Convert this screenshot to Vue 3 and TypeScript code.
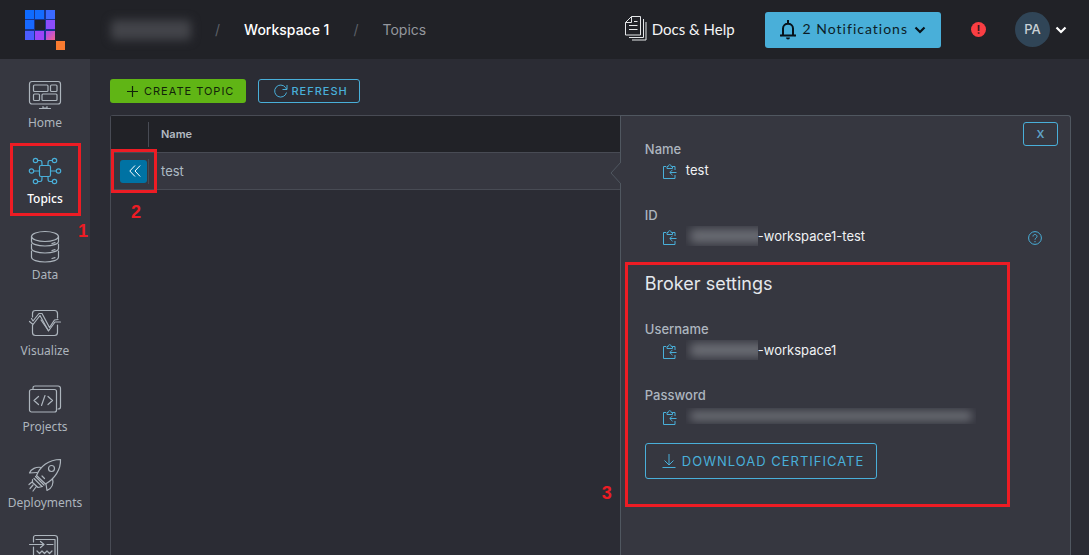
<script setup lang="ts">
import { ref } from 'vue'

interface NavItem {
  id: string
  label: string
}

const navItems: NavItem[] = [
  { id: 'home', label: 'Home' },
  { id: 'topics', label: 'Topics' },
  { id: 'data', label: 'Data' },
  { id: 'visualize', label: 'Visualize' },
  { id: 'projects', label: 'Projects' },
  { id: 'deployments', label: 'Deployments' },
  { id: 'pipeline', label: '' },
]

const active = ref('topics')

const logoCells = [
  { x: 0, y: 0, fill: '#0f6bff' },
  { x: 10, y: 0, fill: '#146cff' },
  { x: 21, y: 0, fill: '#3b69ff' },
  { x: 0, y: 10, fill: '#1769ff' },
  { x: 21, y: 10, fill: '#8b4dfa' },
  { x: 0, y: 21, fill: '#4b5cff' },
  { x: 10, y: 21, fill: '#9b45f8' },
]
</script>

<template>
  <div class="app">
    <header class="topbar">
      <a class="logo" href="#" aria-label="Start page">
        <svg width="42" height="42" viewBox="0 0 42 42">
          <defs>
            <linearGradient id="corner" x1="0" y1="0" x2="1" y2="1">
              <stop offset="0.2" stop-color="#b44be8" />
              <stop offset="1" stop-color="#f0648c" />
            </linearGradient>
          </defs>
          <rect width="30" height="30" x="0" y="1" fill="#17348c" />
          <rect v-for="c in logoCells" :key="`${c.x}-${c.y}`" :x="c.x" :y="c.y + 1" width="9" height="9" :fill="c.fill" />
          <rect x="10" y="11" width="10" height="10" fill="#20222a" />
          <rect x="21" y="22" width="9" height="9" fill="url(#corner)" />
          <rect x="31" y="32" width="9" height="9" fill="#f97b30" />
        </svg>
      </a>
      <nav class="crumbs" aria-label="Breadcrumb">
        <span class="redacted org"></span>
        <span class="slash">/</span>
        <a class="workspace" href="#">Workspace 1</a>
        <span class="slash">/</span>
        <span class="page">Topics</span>
      </nav>
      <a class="docs" href="#">
        <svg width="22" height="25" viewBox="0 0 22 25" fill="none" stroke="#e4e6e8">
          <path d="M6.500.5h9v18.500H.5V6.500zM6.500.5v6H.5M4 9.500h8.500M4 13.500h8.500M9 5.500h3.500" />
          <path d="M18.500 3v18.500H4M21 6v18H7" />
        </svg>
        Docs &amp; Help
      </a>
      <button class="notifications" type="button">
        <svg width="18" height="20" viewBox="0 0 18 20">
          <path d="M9 0v3M4 15V8.500c0-6.300 10-6.300 10 0V15M1 15.500h16M3.500 15l-1.500 1M14.500 15l1.500 1" fill="none" stroke="#07131b" stroke-width="2" />
          <path d="M7 17.500h4a2 2 0 0 1-4 0z" fill="#07131b" />
        </svg>
        <span>2 Notifications</span>
        <svg width="12" height="8" viewBox="0 0 12 8"><path d="M1.500 1.500 6 6l4.500-4.500" fill="none" stroke="#07131b" stroke-width="2.200" /></svg>
      </button>
      <span class="alert" role="img" aria-label="Alert">!</span>
      <button class="account" type="button">
        <span class="avatar">PA</span>
        <svg width="12" height="8" viewBox="0 0 12 8"><path d="M1.500 1.500 6 6l4.500-4.500" fill="none" stroke="#fff" stroke-width="2.200" /></svg>
      </button>
    </header>

    <div class="body">
      <nav class="sidebar" aria-label="Main">
        <a
          v-for="item in navItems"
          :key="item.id"
          href="#"
          class="nav-item"
          :class="{ active: item.id === active }"
          :aria-label="item.label || 'Pipelines'"
          @click.prevent="active = item.id"
        >
          <svg width="34" height="34" viewBox="0 0 34 34" fill="none" stroke="currentColor" stroke-width="1.200" stroke-linecap="round" stroke-linejoin="round">
            <g v-if="item.id === 'home'">
              <rect x="1.500" y="3.500" width="31" height="22.500" rx="2.500" />
              <rect x="5.500" y="7" width="14.500" height="6.500" rx="1" />
              <rect x="22.500" y="7" width="6.500" height="6.500" rx="1" />
              <rect x="5.500" y="16" width="6" height="6.500" rx="1" />
              <rect x="14" y="16" width="15" height="6.500" rx="1" />
              <path d="M15 28.500v1.500h4v-1.500M11.500 30.500h11" />
            </g>
            <g v-else-if="item.id === 'topics'">
              <rect x="11.500" y="11.500" width="11" height="11" rx="1.500" />
              <circle cx="7.500" cy="6.500" r="2.200" /><circle cx="26.500" cy="6.500" r="2.200" />
              <circle cx="3.500" cy="17" r="2.200" /><circle cx="30.500" cy="17" r="2.200" />
              <circle cx="7.500" cy="27.500" r="2.200" /><circle cx="26.500" cy="27.500" r="2.200" />
              <path d="M9.700 6.500H12c2 0 2 1 2 5M24.300 6.500H22c-2 0-2 1-2 5M5.700 17h5.800M22.500 17h5.800M9.700 27.500H12c2 0 2-1 2-5M24.300 27.500H22c-2 0-2-1-2-5" />
            </g>
            <g v-else-if="item.id === 'data'">
              <ellipse cx="17" cy="6.500" rx="13.500" ry="5" />
              <path d="M3.500 6.500v5c0 2.500 6 4.500 13.500 4.500s13.500-2 13.500-4.500v-5M3.500 14v4.500C3.500 21 9.500 23 17 23s13.500-2 13.500-4.500V14M3.500 21v6c0 3 6 5 13.500 5s13.500-2 13.500-5v-6" />
              <path d="M24 13.500l3-.8M24 20.500l3-.8M24 28.500l3-.8" />
            </g>
            <g v-else-if="item.id === 'visualize'">
              <path d="M4.500 11V7.500c0-2 1-3 3-3h19c2 0 3 1 3 3V12M4.500 19v7.500c0 2 1 3 3 3h19c2 0 3-1 3-3V19" />
              <path d="M1.500 15.500 5 18.500l7-9 8.500 15.500 6.500-9h5.500" />
              <path d="M3.500 12.500 5 15l6-7.500h3l7.500 14 5-7.500 3.500-.5M13 14l7 10" />
            </g>
            <g v-else-if="item.id === 'projects'">
              <rect x="1.500" y="7.500" width="27" height="22.500" rx="2" />
              <path d="M5 7V6c0-1.500 1-2 2-2h23c1.500 0 2.500 1 2.500 2.500V25c0 1-1 2-2.500 2" />
              <path d="m10.500 14.500-4.500 4 4.500 4M20 14.500l4.500 4-4.500 4M17 13.500l-3.500 10" />
            </g>
            <g v-else-if="item.id === 'deployments'">
              <path d="M8.500 17.500C12 9 20 1.500 32.500 1.500c.5 10-6 19.500-15 24.500z" />
              <circle cx="23.500" cy="10.500" r="3" />
              <path d="M13.500 9.500C8 8.500 3 11 1.500 15l7.500-.5M24.500 20.500c1.500 5-.5 10-5.500 12l-1-6.500" />
              <path d="m7.500 18.500 8.500 8.500M6 20.500l8 8M4.500 21.500v3l5.500 5 4.500-1M14 18l2.500 2.500M5 27l-3 3.500M8 29l-3 4M4 24l-3 2.500" />
            </g>
            <g v-else>
              <path d="M5.500 8V3.500c0-1 1-2 2-2h19c1.500 0 3 1 3 2.500V34M5.500 13v18M8 5.500h19v25M1.500 10.500h13M12.500 7.500l3.500 3-3.500 3M19 10.500h6" />
              <path d="m9 17 2.500 2.500L14 17l2.500 2.500L19 17l2.500 2.500L24 17M9 23h14" />
            </g>
          </svg>
          <span class="nav-label">{{ item.label }}</span>
          <template v-if="item.id === 'topics'">
            <span class="mark mark-nav"></span>
            <span class="step step-nav">1</span>
          </template>
        </a>
      </nav>

      <main class="content">
        <div class="toolbar">
          <button class="btn create" type="button">
            <svg width="11" height="11" viewBox="0 0 11 11"><path d="M5.500 0v11M0 5.500h11" stroke="currentColor" stroke-width="1.200" /></svg>
            CREATE TOPIC
          </button>
          <button class="btn refresh" type="button">
            <svg width="14" height="14" viewBox="0 0 14 14" fill="none" stroke="currentColor"><path d="M12.500 8.500A6 6 0 1 1 11.500 3.500L12.500 5M13 1v4.500H8.500" /></svg>
            REFRESH
          </button>
        </div>

        <div class="workarea">
          <div class="list">
            <table class="topics">
              <thead>
                <tr><th class="toggle"><span class="divider"></span></th><th scope="col">Name</th></tr>
              </thead>
              <tbody>
                <tr>
                  <td class="toggle">
                    <span class="divider"></span>
                    <button class="collapse" type="button" aria-label="Close details">
                      <svg width="12" height="12" viewBox="0 0 12 12" fill="none" stroke="#fff"><path d="M6 .5.800 6 6 11.500M11.200.5 6 6l5.200 5.500" /></svg>
                    </button>
                    <span class="mark mark-row"></span>
                    <span class="step step-row">2</span>
                  </td>
                  <td class="name">
                    test
                    <svg class="notch" width="11" height="22" viewBox="0 0 11 22"><path d="M11 0 1 11l10 11" fill="#363740" stroke="#505760" /></svg>
                  </td>
                </tr>
              </tbody>
            </table>
          </div>

          <section class="details" aria-label="Topic details">
            <div class="fields">
              <dl class="field">
                <dt>Name</dt>
                <dd>
                  <button class="copy" type="button" aria-label="Copy name"><svg width="14" height="15" viewBox="0 0 14 15"><use href="#clip" /></svg></button>
                  test
                </dd>
              </dl>
              <dl class="field">
                <dt>ID</dt>
                <dd>
                  <button class="copy" type="button" aria-label="Copy ID"><svg width="14" height="15" viewBox="0 0 14 15"><use href="#clip" /></svg></button>
                  <span class="mask"><span class="redacted"></span></span>-workspace1-test
                </dd>
              </dl>
              <div class="broker">
                <h2>Broker settings</h2>
                <dl class="field">
                  <dt>Username</dt>
                  <dd>
                    <button class="copy" type="button" aria-label="Copy username"><svg width="14" height="15" viewBox="0 0 14 15"><use href="#clip" /></svg></button>
                    <span class="mask"><span class="redacted"></span></span>-workspace1
                  </dd>
                </dl>
                <dl class="field">
                  <dt>Password</dt>
                  <dd>
                    <button class="copy" type="button" aria-label="Copy password"><svg width="14" height="15" viewBox="0 0 14 15"><use href="#clip" /></svg></button>
                    <span class="mask long"><span class="redacted"></span></span>
                  </dd>
                </dl>
                <button class="btn download" type="button">
                  <svg width="14" height="14" viewBox="0 0 14 14" fill="none" stroke="currentColor"><path d="M7 0v11M2.500 6.500 7 11l4.500-4.500M.5 13.500h13" /></svg>
                  DOWNLOAD CERTIFICATE
                </button>
                <span class="step step-broker">3</span>
              </div>
            </div>
            <div class="side">
              <button class="close" type="button" aria-label="Close panel">X</button>
              <button class="help" type="button" aria-label="Help">
                <svg width="14" height="14" viewBox="0 0 14 14" fill="none" stroke="currentColor"><circle cx="7" cy="7" r="6.400" /><path d="M5 5.500c0-2.800 4-2.500 4 0C9 7 7 7 7 8.700M7 10v1.200" /></svg>
              </button>
            </div>
          </section>
        </div>
      </main>
    </div>

    <svg class="symbols" width="0" height="0" aria-hidden="true">
      <symbol id="clip" viewBox="0 0 14 15">
        <path d="M3 2.500H.5v12h11.500V11M12 6V2.500H9.500M4 4.500v-2h1.200c0-2.400 3-2.400 3 0h1.300v2zM13.500 8.500H7M9.500 5.800 6.800 8.500l2.700 2.700" fill="none" stroke="#49afd9" />
      </symbol>
    </svg>
  </div>
</template>

<style>
body {
  background: #2b2c34;
}
</style>

<style scoped>
* {
  box-sizing: border-box;
}

.app {
  display: flex;
  flex-direction: column;
  height: 100vh;
  overflow: hidden;
  background: #2b2c34;
  color: #adbbc4;
  font-family: Inter, 'Liberation Sans', sans-serif;
  font-size: 13px;
}

button {
  padding: 0;
  border: 0;
  background: none;
  color: inherit;
  font: inherit;
  cursor: pointer;
}

a {
  color: inherit;
  text-decoration: none;
}

svg {
  display: block;
  flex: none;
}

.symbols {
  position: absolute;
}

.topbar {
  display: flex;
  flex: none;
  align-items: center;
  height: 59px;
  padding: 0 22px 0 25px;
  background: #212227;
}

.logo {
  margin-right: 44px;
}

.crumbs {
  display: flex;
  flex: 1;
  align-items: center;
  gap: 24px;
  font-size: 14px;
}

.redacted {
  display: block;
  border-radius: 4px;
  background: #6a6c73;
  filter: blur(5px);
}

.org {
  width: 80px;
  height: 20px;
  background: #43444a;
}

.slash {
  color: #5c6068;
}

.workspace {
  color: #fff;
  font-weight: 500;
}

.page {
  color: #94979d;
}

.docs {
  display: flex;
  align-items: center;
  gap: 5px;
  margin-right: 30px;
  padding-bottom: 2px;
  color: #f4f5f6;
  font-family: Lato, sans-serif;
  font-size: 15px;
}

.notifications {
  display: flex;
  align-items: center;
  gap: 6px;
  height: 36px;
  padding: 0 15px 0 14px;
  border-radius: 3px;
  background: #49afd9;
  color: #0c1d27;
  font-family: Lato, sans-serif;
  font-size: 14px;
  letter-spacing: 1px;
}

.notifications > span {
  padding-bottom: 2px;
}

.alert {
  width: 15px;
  height: 15px;
  margin: 0 29px 0 30px;
  border-radius: 50%;
  background: #fa3e43;
  color: #34181c;
  font-size: 12px;
  font-weight: 600;
  line-height: 15px;
  text-align: center;
}

.account {
  display: flex;
  align-items: center;
  gap: 5px;
}

.avatar {
  width: 35px;
  height: 35px;
  border-radius: 50%;
  background: #304557;
  color: #c9d0d5;
  font-size: 13px;
  font-weight: 500;
  line-height: 35px;
}

.body {
  display: flex;
  flex: 1;
  min-height: 0;
}

.sidebar {
  display: flex;
  flex: none;
  flex-direction: column;
  width: 90px;
  padding-top: 8px;
  background: #363740;
}

.nav-item {
  position: relative;
  display: flex;
  flex: none;
  flex-direction: column;
  align-items: center;
  gap: 2px;
  height: 76px;
  padding-top: 11px;
  color: #adb5bd;
  font-family: 'Noto Sans', 'Open Sans', sans-serif;
  font-size: 12px;
  line-height: 18px;
}

.nav-item.active {
  color: #49afd9;
}

.active .nav-label {
  color: #fff;
  font-weight: 500;
}

.mark {
  position: absolute;
  border: 3px solid #ed1c24;
  pointer-events: none;
}

.mark-nav {
  top: 0;
  right: 9px;
  left: 10px;
  height: 73px;
}

.step {
  position: absolute;
  color: #ed1c24;
  font-family: 'Liberation Sans Narrow', 'Liberation Sans', sans-serif;
  font-size: 18px;
  font-weight: 700;
  line-height: 20px;
}

.step-nav {
  top: 78px;
  right: 2px;
}

.content {
  display: flex;
  flex: 1;
  flex-direction: column;
  min-width: 0;
  padding: 20px 18px 0 20px;
}

.toolbar {
  display: flex;
  flex: none;
  gap: 12px;
  margin-bottom: 12px;
}

.btn {
  display: flex;
  align-items: center;
  justify-content: center;
  gap: 4px;
  height: 24px;
  border-radius: 3px;
  font-size: 11px;
  letter-spacing: 1px;
  white-space: nowrap;
}

.create {
  gap: 6px;
  padding: 0 12px 0 17px;
  background: #60b515;
  color: #12240a;
}

.refresh {
  gap: 3px;
  padding: 0 11px 0 15px;
  border: 1px solid #49afd9;
  color: #49afd9;
  font-weight: 500;
}

.workarea {
  display: grid;
  flex: 1;
  grid-template-columns: 113fr 100fr;
  min-height: 0;
}

.list {
  border-top: 1px solid #484b54;
  border-left: 1px solid #484b54;
  border-top-left-radius: 3px;
}

.topics {
  width: 100%;
  border-spacing: 0;
}

.topics th,
.topics td {
  position: relative;
  height: 37px;
  padding: 0 12px;
  border-bottom: 1px solid #484b54;
  text-align: left;
}

.topics th {
  background: #212227;
  color: #b3bac2;
  font-size: 11px;
  font-weight: 600;
}

.topics td {
  background: #363740;
  color: #adbbc4;
}

.topics .toggle {
  width: 38px;
  padding: 0 0 0 9px;
}

.divider {
  position: absolute;
  top: 6px;
  right: 0;
  bottom: 5px;
  width: 1px;
  background: #484b54;
}

.collapse {
  display: grid;
  place-items: center;
  width: 27px;
  height: 23px;
  padding-left: 3px;
  border-radius: 3px;
  background: #0072a3;
}

.mark-row {
  top: -4px;
  left: 0;
  width: 46px;
  height: 44px;
  z-index: 1;
}

.step-row {
  top: 49px;
  left: 20px;
}

.notch {
  position: absolute;
  top: 9px;
  right: -1px;
}

.details {
  display: grid;
  grid-template-columns: 1fr 60px;
  align-items: start;
  border: 1px solid #505760;
  border-bottom: 0;
  border-top-right-radius: 3px;
  background: #363740;
}

.fields {
  padding: 23px 0 0 4px;
}

.fields > .field {
  margin-left: 20px;
}

.field {
  margin: 0 0 24px;
}

.field dt {
  color: #adb5bf;
  font-size: 13px;
  font-weight: 500;
  line-height: 20px;
}

.field dd {
  display: flex;
  align-items: center;
  height: 22px;
  margin: 0 0 0 18px;
  color: #f0f2f4;
  font-size: 13px;
}

.copy {
  margin: 3px 9px 0 0;
}

.mask {
  width: 72px;
  height: 20px;
  padding: 3px 0 3px 4px;
  overflow: hidden;
}

.mask .redacted {
  height: 14px;
  margin-right: -8px;
}

.mask.long {
  width: 290px;
  height: 16px;
  padding: 3px 4px;
}

.mask.long .redacted {
  height: 10px;
  margin-right: 0;
  filter: blur(4px);
}

.broker {
  position: relative;
  margin-top: -9px;
  padding: 7px 17px 25px;
  border: 3px solid #ed1c24;
}

.broker h2 {
  margin: 0 0 23px;
  color: #e5e8ec;
  font-size: 18px;
  font-weight: 400;
  line-height: 24px;
}

.download {
  height: 36px;
  margin-top: -8px;
  padding: 0 12px 0 16px;
  gap: 6px;
  border: 1px solid #49afd9;
  color: #49afd9;
  font-size: 13px;
}

.step-broker {
  bottom: 1px;
  left: -26px;
}

.side {
  display: flex;
  flex-direction: column;
  align-items: flex-end;
  gap: 85px;
  padding: 6px 12px 0 0;
}

.close {
  width: 35px;
  height: 24px;
  border: 1px solid #49afd9;
  border-radius: 3px;
  color: #5fa3c9;
  font-size: 11px;
  font-weight: 600;
}

.help {
  margin-right: 16px;
  color: #49afd9;
}
</style>
